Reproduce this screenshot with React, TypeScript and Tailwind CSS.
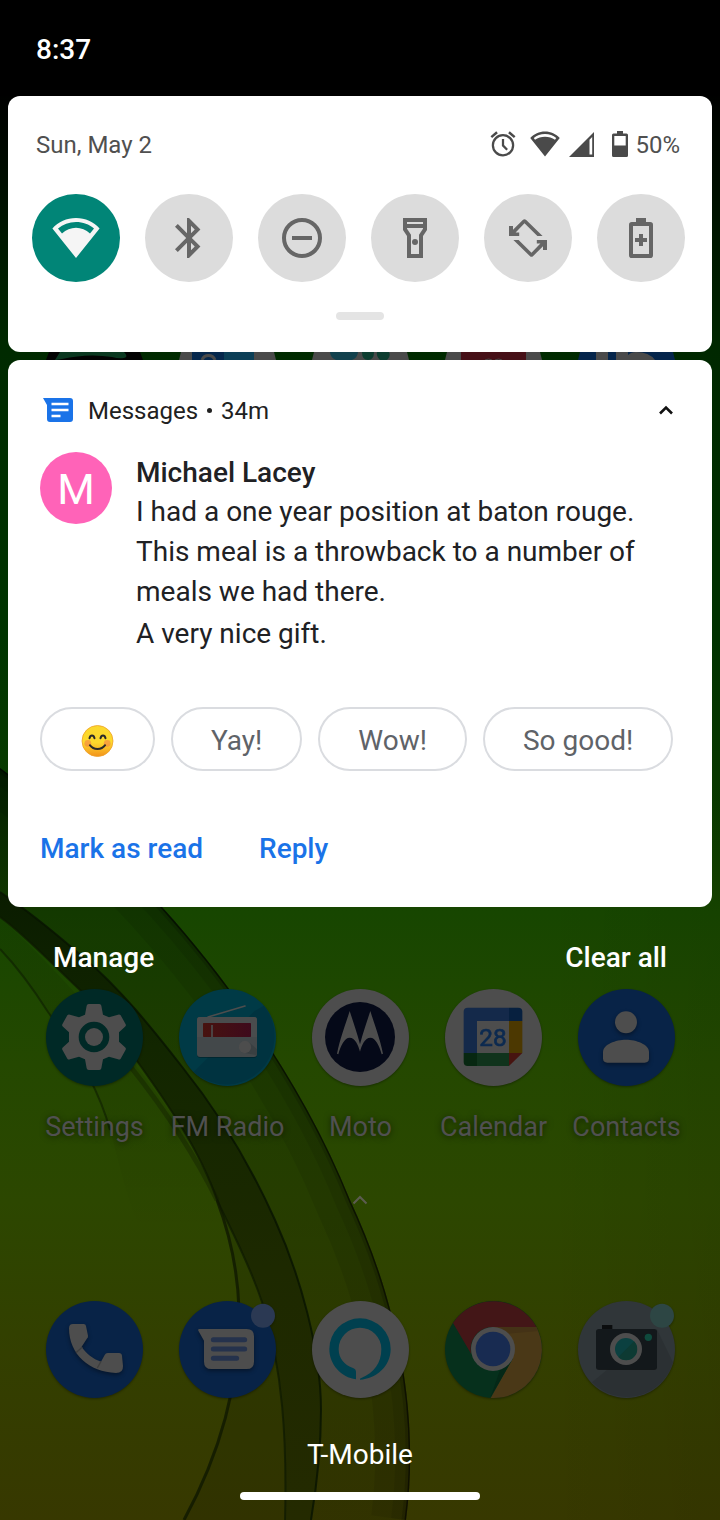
import React from "react";

function WifiGlyph({ className, fill }: { className: string; fill: string }) {
  return (
    <svg viewBox="0 0 24 24" className={className} fill={fill} fillRule="evenodd" aria-hidden="true">
      <path d="M12 2C7.3 2 3.2 3.9.2 7.2L12 22 23.8 7.2C20.8 3.9 16.7 2 12 2zM12 4c3.5 0 6.5 1.2 9 3.2L19 9.7C17 8 14.6 6.9 12 6.9S7 8 5 9.7L3 7.2C5.5 5.2 8.5 4 12 4z" />
    </svg>
  );
}

const rotateHalf = "M2.5 6h2v1.9L9.4 3q.85-.85 1.7 0L19.3 11h-2.6L10.25 4.6 5.8 9.2h1.8V11H2.5z";

const tiles: { label: string; on: boolean; icon: React.ReactNode }[] = [
  { label: "Wi-Fi", on: true, icon: <WifiGlyph className="size-12" fill="#f5f5f5" /> },
  {
    label: "Bluetooth",
    on: false,
    icon: (
      <svg viewBox="0 0 24 24" className="size-12" fill="#666">
        <path d="M17.71 7.71L12 2h-1v7.59L6.41 5 5 6.41 10.59 12 5 17.59 6.41 19 11 14.41V22h1l5.71-5.71-4.3-4.29zM13 5.83l1.88 1.88L13 9.59zm1.88 10.46L13 18.17v-3.76z" />
      </svg>
    ),
  },
  {
    label: "Do Not Disturb",
    on: false,
    icon: (
      <svg viewBox="0 0 24 24" className="size-12" fill="#666">
        <circle cx="12" cy="12" r="9" fill="none" stroke="#666" strokeWidth="2" />
        <path d="M7 11h10v2H7z" />
      </svg>
    ),
  },
  {
    label: "Flashlight",
    on: false,
    icon: (
      <svg viewBox="0 0 24 24" className="size-12" fill="#666" fillRule="evenodd">
        <path d="M6 2v6l2 3v11h8V11l2-3V2zM16 4v1H8V4zM14 10.4V20h-4v-9.6L8 7.4V7h8v.4z" />
        <circle cx="12" cy="14" r="1.5" />
      </svg>
    ),
  },
  {
    label: "Auto-rotate",
    on: false,
    icon: (
      <svg viewBox="0 0 24 24" className="size-12" fill="#666">
        <path d={rotateHalf} />
        <path d={rotateHalf} transform="rotate(180 12 12)" />
      </svg>
    ),
  },
  {
    label: "Battery Saver",
    on: false,
    icon: (
      <svg viewBox="0 0 24 24" className="size-12" fill="#666">
        <rect x="7" y="5" width="10" height="16" rx=".4" fill="none" stroke="#666" strokeWidth="2" />
        <path d="M9.5 2h5v2.5h-5zM11 10h2v2h2v2h-2v2h-2v-2H9v-2h2z" />
      </svg>
    ),
  },
];

function SmileEmoji() {
  return (
    <svg viewBox="0 0 32 32" className="h-8 w-[35px]" role="img" aria-label="Smiling face">
      <defs>
        <linearGradient id="face" x1="0" x2="0" y1="0" y2="1">
          <stop offset="0" stopColor="#fbd82c" />
          <stop offset=".55" stopColor="#fdd92c" />
          <stop offset="1" stopColor="#f3921b" />
        </linearGradient>
      </defs>
      <circle cx="16" cy="16" r="15.5" fill="url(#face)" stroke="#eda12a" strokeWidth=".8" />
      <circle cx="6.3" cy="18.3" r="3.4" fill="#f2704a" opacity=".5" />
      <circle cx="25.7" cy="18.3" r="3.4" fill="#f2704a" opacity=".5" />
      <path d="M8 13.2c.8-3.6 4.2-3.6 5 0M19 13.2c.8-3.6 4.2-3.6 5 0" fill="none" stroke="#2a2a2a" strokeWidth="2" strokeLinecap="round" />
      <path d="M8.4 20.2c3.6 5 11.6 5 15.2 0" fill="none" stroke="#2a2a2a" strokeWidth="2" strokeLinecap="round" />
    </svg>
  );
}

const disc = "size-[97px] overflow-visible drop-shadow-[0_1px_1px_rgba(0,0,0,0.35)]";

function SettingsIcon() {
  return (
    <svg viewBox="138 267 291 291" className={disc}>
      <circle cx="283.500" cy="412.500" r="145.500" fill="#002926" />
      <path
        fillRule="evenodd"
        fill="#4d4d4d"
        d="M266 312h32q5 0 6 5l5 27 18 8 27-8q5-2 8 2l15 27q2 4-2 7l-18 17v28l18 17q4 3 2 7l-15 27q-3 4-8 2l-27-8-18 8-5 27q-1 5-6 5h-32q-5 0-6-5l-5-27-18-8-27 8q-5 2-8-2l-15-27q-2-4 2-7l18-17v-28l-18-17q-4-3-2-7l15-27q3-4 8-2l27 8 18-8 5-27q1-5 6-5zM282 365a46 46 0 1 0 0 92 46 46 0 1 0 0-92z"
      />
      <circle cx="282" cy="411" r="27" fill="#4d4d4d" />
    </svg>
  );
}

function RadioIcon() {
  return (
    <svg viewBox="537 267 291 291" className={disc}>
      <defs>
        <linearGradient id="dial" x1="0" x2="1">
          <stop offset="0" stopColor="#47130f" />
          <stop offset="1" stopColor="#3e0a1c" />
        </linearGradient>
      </defs>
      <circle cx="682.500" cy="412.500" r="145.500" fill="#003a46" />
      <path d="M581 516L764 333 792 317A145.500 145.500 0 0 1 581 516z" fill="#003340" />
      <path d="M624 351L735 318" stroke="#4d4d4d" strokeWidth="5" strokeLinecap="round" />
      <rect x="591" y="353" width="180" height="120" rx="9" fill="#00191e" opacity=".6" />
      <rect x="591" y="351" width="180" height="120" rx="9" fill="#43484a" />
      <path d="M591 411v-51q0-9 9-9h162q9 0 9 9v51z" fill="#494c4d" />
      <rect x="609" y="369" width="144" height="42" rx="2" fill="url(#dial)" />
      <path d="M636 375v36" stroke="#4d4d4d" strokeWidth="5" />
      <path d="M749 428l22 20v18L735 459z" fill="#3a4042" />
      <circle cx="735" cy="441" r="18.500" fill="#4d4d4d" />
    </svg>
  );
}

function MotoIcon() {
  return (
    <svg viewBox="-144 267 291 291" className={disc}>
      <circle cx="1.500" cy="412.500" r="145.500" fill="#4d4d4d" />
      <circle cx="0" cy="411" r="105" fill="#050918" />
      <path
        fill="#4d4d4d"
        d="M-31 333C-20 366-8 402 0 433 8 402 20 366 31 333 43 372 61 420 69 461L65 463C58 436 46 413 31 413 15 413 5 435 0 455-5 435-15 413-31 413-46 413-58 436-65 463L-69 461C-61 420-43 372-31 333z"
      />
    </svg>
  );
}

function CalendarIcon() {
  return (
    <svg viewBox="255 267 291 291" className={disc}>
      <circle cx="400.500" cy="412.500" r="145.500" fill="#4d4d4d" />
      <path d="M323 323h124v40h-96v96h-40V335q0-12 12-12z" fill="#14294a" />
      <path d="M447 323h28q12 0 12 12v28h-40z" fill="#07203f" />
      <path d="M447 363h40v96h-40z" fill="#4c3801" />
      <path d="M351 459h96v39h-96z" fill="#10331c" />
      <path d="M311 459h40v39h-28q-12 0-12-12z" fill="#072711" />
      <path d="M447 459h40l-40 39z" fill="#471410" />
      <text
        x="399"
        y="437"
        textAnchor="middle"
        fontSize="73"
        fontFamily="Roboto, sans-serif"
        fontWeight="400"
        fill="#0c2a50"
        stroke="#0c2a50"
        strokeWidth="2"
      >
        28
      </text>
    </svg>
  );
}

function ContactsIcon() {
  return (
    <svg viewBox="654 267 291 291" className={disc}>
      <circle cx="799.500" cy="412.500" r="145.500" fill="#082347" />
      <g className="drop-shadow-[0_6px_6px_rgba(0,0,0,0.4)]" fill="#4d4d4d">
        <circle cx="798" cy="367" r="33" />
        <path d="M729 456c0-23 38-37 69-37s69 14 69 37v19q0 13-13 13H742q-13 0-13-13z" />
      </g>
    </svg>
  );
}

function PhoneIcon() {
  return (
    <svg viewBox="138 303 291 291" className={disc}>
      <circle cx="283.500" cy="448.500" r="145.500" fill="#082347" />
      <g className="drop-shadow-[0_6px_6px_rgba(0,0,0,0.4)]">
        <path
          fill="#4d4d4d"
          d="M219 372h32q6 0 7 6l6 29q1 6-4 10l-15 23c13 20 34 37 58 45l11-20q3-6 9-6h34q8 0 9 8l3 31q1 21-21 21C268 517 207 463 207 385q0-13 12-13z"
        />
        <path d="M228 458l19-17M292 504l11-20" stroke="#3e3e3e" strokeWidth="4" />
      </g>
    </svg>
  );
}

function MessagesIcon() {
  return (
    <svg viewBox="537 303 291 291" className={disc}>
      <circle cx="682.500" cy="448.500" r="145.500" fill="#082347" />
      <g className="drop-shadow-[0_6px_6px_rgba(0,0,0,0.4)]">
        <path fill="#4d4d4d" d="M598 387h142q22 0 22 22v76q0 22-22 22H634q-22 0-22-22v-63l-17-30q-2-5 3-5z" />
      </g>
      <path d="M640 419h94M640 447h94M640 475h70" stroke="#25324c" strokeWidth="15" strokeLinecap="round" />
      <circle cx="789" cy="347" r="36" fill="#2b3953" />
    </svg>
  );
}

function AlexaIcon() {
  return (
    <svg viewBox="-144 303 291 291" className={disc}>
      <circle cx="1.500" cy="448.500" r="145.500" fill="#4d4d4d" />
      <path
        fillRule="evenodd"
        fill="#00404f"
        d="M0 355a92 92 0 0 1 92 92c0 52-44 90-92 92 0-3 1-4 4-5 38-16 60-44 60-87a64 64 0 1 0-128 0c0 29 18 49 43 57q9 3 9 12v22C-56 532-92 494-92 447A92 92 0 0 1 0 355z"
      />
    </svg>
  );
}

function ChromeIcon() {
  return (
    <svg viewBox="255 303 291 291" className={disc}>
      <circle cx="400.500" cy="448.500" r="145.500" fill="#06301c" />
      <path d="M279 369A145.500 145.500 0 0 1 529 381H400a66 66 0 0 0-66 82z" fill="#431617" />
      <path d="M400 381h129A145.500 145.500 0 0 1 392 594l66-118z" fill="#4a3817" />
      <path d="M400 381h129l5 12-92 8z" fill="#443216" />
      <path d="M458 476l-31 54-35 60 30-85z" fill="#052817" />
      <circle cx="399" cy="447" r="66" fill="#4d4d4d" />
      <circle cx="399" cy="447" r="52" fill="#182b51" />
    </svg>
  );
}

function CameraIcon() {
  return (
    <svg viewBox="654 303 291 291" className={disc}>
      <circle cx="799.500" cy="448.500" r="145.500" fill="#303639" />
      <path d="M696 547L890 387l49 100A145 145 0 0 1 696 547z" fill="#2b3033" />
      <path d="M726 375h31v16h-31z" fill="#0b0d0e" />
      <rect x="708" y="389" width="183" height="121" rx="9" fill="#0b0e10" opacity=".7" />
      <rect x="708" y="387" width="183" height="120" rx="9" fill="#13181b" />
      <circle cx="798" cy="447" r="48" fill="#4d4d4d" />
      <circle cx="798" cy="447" r="33" fill="#0b4040" />
      <path d="M775 471L822 424A33 33 0 0 1 775 471z" fill="#0d3a33" />
      <circle cx="865" cy="412" r="11" fill="#0f4a3d" />
      <circle cx="906" cy="347" r="36" fill="#2d4644" />
    </svg>
  );
}

const homeApps = [
  { name: "Settings", icon: <SettingsIcon /> },
  { name: "FM Radio", icon: <RadioIcon /> },
  { name: "Moto", icon: <MotoIcon /> },
  { name: "Calendar", icon: <CalendarIcon /> },
  { name: "Contacts", icon: <ContactsIcon /> },
];

const dockApps = [
  { name: "Phone", icon: <PhoneIcon /> },
  { name: "Messages", icon: <MessagesIcon /> },
  { name: "Alexa", icon: <AlexaIcon /> },
  { name: "Chrome", icon: <ChromeIcon /> },
  { name: "Camera", icon: <CameraIcon /> },
];

const sliver = "h-2 w-[97px]";

function HiddenAppRow() {
  return (
    <div className="grid h-2 grid-cols-5 justify-items-center pr-[27px] pl-7" aria-hidden="true">
      <svg viewBox="0 0 97 8" className={sliver}>
        <path d="M3 0h91l3 8H0z" fill="#020202" />
        <path d="M14 0h64q5 5 0 6-5 1-12-1-24-4-50 2l-6 1H9z" fill="#0a3820" />
      </svg>
      <svg viewBox="0 0 97 8" className={sliver}>
        <path d="M2 0h93l2 8H0z" fill="#4a4a4a" />
        <path d="M13 0h32v8H13z" fill="#06274c" />
        <path d="M45 0h30v8H45z" fill="#0c3f57" />
        <path d="M23 8a7 7 0 0 1 13 0" fill="none" stroke="#4a4a4a" strokeWidth="3" />
      </svg>
      <svg viewBox="0 0 97 8" className={sliver}>
        <path d="M2 0h93l2 8H0z" fill="#4a4a4a" />
        <path d="M18 0h28q0 5-6 8H24q-6-3-6-8z" fill="#12414d" />
        <path d="M50 0h12q0 8-6 8t-6-8zM65 0h12q2 4-2 8H68q-4-4-3-8z" fill="#0d3d30" />
      </svg>
      <svg viewBox="0 0 97 8" className={sliver}>
        <path d="M2 0h93l2 8H0z" fill="#4a4a4a" />
        <path d="M16 0h65v8H16z" fill="#461017" />
        <path d="M40 8q4-2 7 0M50 8q4-2 7 0" stroke="#4a4a4a" strokeWidth="1" fill="none" />
      </svg>
      <svg viewBox="0 0 97 8" className={sliver}>
        <path d="M2 0h93l2 8H0z" fill="#05254b" />
        <path d="M18 0h12v8H18zM38 0h12v3q3-3 8-3 13 0 19 8H38z" fill="#4a4a4a" />
      </svg>
    </div>
  );
}

const bladeEdge = "M0 768C70 820 130 870 162 907 237 990 308 1095 350 1200 390 1285 422 1400 406 1520";
const bandUpper = "M0 892C30 912 60 937 84 958 120 988 155 1032 183 1068 215 1108 248 1160 275 1220 300 1275 321 1350 321 1410 321 1450 316 1490 311 1520";
const bandLower = "M285 1520C287 1440 283 1370 262 1302 248 1260 230 1228 217 1200 200 1150 165 1100 137 1061 115 1030 98 1008 80 990 50 962 25 935 0 917";

function Wallpaper() {
  return (
    <svg viewBox="0 0 720 1520" preserveAspectRatio="none" className="absolute inset-0 -z-10 size-full" aria-hidden="true">
      <defs>
        <linearGradient id="sky" x1="0" x2="0" y1="0" y2="1">
          <stop offset=".06" stopColor="#000000" />
          <stop offset=".23" stopColor="#002a00" />
          <stop offset=".42" stopColor="#003500" />
          <stop offset=".53" stopColor="#0a3c00" />
          <stop offset=".6" stopColor="#174600" />
          <stop offset=".7" stopColor="#244800" />
          <stop offset=".79" stopColor="#2c4700" />
          <stop offset=".89" stopColor="#333f00" />
          <stop offset="1" stopColor="#373800" />
        </linearGradient>
        <linearGradient id="edge" x1="0" x2="1" y1="0" y2="0">
          <stop offset=".75" stopColor="#000" stopOpacity="0" />
          <stop offset="1" stopColor="#000" stopOpacity=".06" />
        </linearGradient>
        <linearGradient id="band" gradientUnits="userSpaceOnUse" x1="0" x2="0" y1="890" y2="1520">
          <stop offset="0" stopColor="#0a1c00" />
          <stop offset=".25" stopColor="#122600" />
          <stop offset=".6" stopColor="#1d2900" />
          <stop offset="1" stopColor="#242a00" />
        </linearGradient>
        <linearGradient id="blade" gradientUnits="userSpaceOnUse" x1="0" x2="0" y1="768" y2="1520">
          <stop offset="0" stopColor="#000" stopOpacity=".45" />
          <stop offset=".2" stopColor="#000" stopOpacity=".18" />
          <stop offset="1" stopColor="#000" stopOpacity=".1" />
        </linearGradient>
        <linearGradient id="leaf" gradientUnits="userSpaceOnUse" x1="0" x2="0" y1="1040" y2="1240">
          <stop offset="0" stopColor="#000" stopOpacity=".08" />
          <stop offset="1" stopColor="#000" stopOpacity="0" />
        </linearGradient>
        <clipPath id="bladeShape">
          <path d={bladeEdge + "H0z"} />
        </clipPath>
      </defs>
      <path d="M0 0h720v1520H0z" fill="url(#sky)" />
      <path d="M0 0h720v1520H0z" fill="url(#edge)" />

      <path d={bladeEdge + "H311C316 1490 321 1450 321 1410 321 1350 300 1275 275 1220 248 1160 215 1108 183 1068 155 1032 120 988 84 958 60 937 30 912 0 892z"} fill="url(#blade)" />
      <g clipPath="url(#bladeShape)" fill="none" stroke="#000">
        <path d={bladeEdge} strokeWidth="70" opacity=".08" />
        <path d={bladeEdge} strokeWidth="30" opacity=".08" />
        <path d={bladeEdge} strokeWidth="9" opacity=".15" />
        <path d={bladeEdge} strokeWidth="3" opacity=".55" />
      </g>

      <path d="M0 949C20 970 34 990 48 1012 70 1042 98 1085 110 1130 120 1165 126 1200 145 1240H232L217 1200C190 1120 80 990 0 917z" fill="url(#leaf)" />
      <path d="M217 1200C232 1240 238 1275 239 1310 240 1380 222 1450 184 1520H285C287 1440 283 1370 262 1302 248 1260 230 1228 217 1200z" fill="#000" opacity=".1" />
      <path d={bandUpper + "H285C287 1440 283 1370 262 1302 248 1260 230 1228 217 1200 200 1150 165 1100 137 1061 115 1030 98 1008 80 990 50 962 25 935 0 917z"} fill="url(#band)" />
      <path d={bandUpper} fill="none" stroke="#081300" strokeWidth="2" opacity=".8" />
      <path d={bandLower} fill="none" stroke="#0d1800" strokeWidth="2" opacity=".7" />
      <path d="M130 1066C165 1110 195 1155 217 1200" fill="none" stroke="#0d1800" strokeWidth="5" opacity=".35" />
      <path d="M217 1200C232 1240 238 1275 239 1310 240 1380 222 1450 184 1520" fill="none" stroke="#0f1800" strokeWidth="3" opacity=".8" />
      <path d="M0 949C20 970 34 990 48 1012 70 1042 98 1085 110 1130" fill="none" stroke="#0d1c00" strokeWidth="2" opacity=".6" />
    </svg>
  );
}

const chip = "flex h-16 items-center rounded-full border-2 border-[#dadce0] px-[38px] pt-[3px] text-[28px] text-[#5f6368]";

export default function App() {
  return (
    <main className="relative isolate flex min-h-screen flex-col overflow-hidden bg-black font-['Roboto',sans-serif]">
      <Wallpaper />

      <header className="flex h-24 items-center bg-black px-9 pt-1 text-[28px] leading-8 font-medium text-white">
        <time>8:37</time>
      </header>

      <section aria-label="Quick settings" className="mx-2 rounded-xl bg-white pt-[34px] pb-8">
        <div className="flex h-7 items-center pr-8 pl-7 text-2xl leading-7 text-[#505050]">
          <span className="pt-0.5">Sun, May 2</span>
          <svg viewBox="0 0 24 24" className="ml-auto size-[30px]" fill="#4a4a4a" aria-hidden="true">
            <path d="M22 5.72l-4.6-3.86-1.29 1.53 4.6 3.86zM7.88 3.39L6.6 1.86 2 5.71l1.29 1.53zM12.9 8H11.1v5.500l3.600 3.600 1.250-1.200-3.050-3.100zM12 4a9 9 0 1 0 0 18 9 9 0 0 0 0-18zm0 16.200a7.200 7.200 0 1 1 0-14.400 7.200 7.200 0 0 1 0 14.400z" />
          </svg>
          <svg viewBox="0 0 24 24" className="ml-3 size-[30px]" fill="#4a4a4a" fillRule="evenodd" aria-hidden="true">
            <path d="M12 2C7.300 2 3.200 3.900.2 7.200L12 22 23.800 7.200C20.800 3.900 16.700 2 12 2zM12 4c3.500 0 6.500 1.200 9 3.200L20 8.500C17.700 7 15 6.100 12 6.100S6.300 7 4 8.500L3 7.200C5.500 5.200 8.500 4 12 4z" />
          </svg>
          <svg viewBox="0 0 25 25" className="ml-[9px] size-[25px]" fill="#4a4a4a" fillRule="evenodd" aria-hidden="true">
            <path d="M25 0v25H0zM23.200 5L20.500 7.700V22.500h2.700z" />
          </svg>
          <svg viewBox="0 0 16 26" className="ml-[18px] h-[26px] w-4" fill="#4a4a4a" fillRule="evenodd" aria-hidden="true">
            <path d="M5 0h6v2.500h3.500Q16 2.500 16 4v20.500q0 1.500-1.500 1.500h-13Q0 26 0 24.500V4q0-1.500 1.500-1.500H5zM2.300 5v9.500h11.400V5z" />
          </svg>
          <span className="ml-[7px] pt-0.5">50%</span>
        </div>

        <div className="mt-9 flex justify-between pr-[27px] pl-6">
          {tiles.map((tile) => (
            <button
              key={tile.label}
              type="button"
              aria-label={tile.label}
              aria-pressed={tile.on}
              className={
                tile.on
                  ? "flex size-[88px] items-center justify-center rounded-full bg-[#018577]"
                  : "flex size-[88px] items-center justify-center rounded-full bg-[#dcdcdc]"
              }
            >
              {tile.icon}
            </button>
          ))}
        </div>

        <div className="mx-auto mt-[30px] h-2 w-12 rounded-full bg-[#e4e4e4]" />
      </section>

      <HiddenAppRow />

      <article className="mx-2 rounded-xl bg-white px-8 pt-9 pb-[38px]">
        <div className="flex h-7 items-center text-2xl leading-7 text-[#212121]">
          <svg viewBox="0 0 30 24" className="ml-[3px] h-6 w-[30px]" aria-hidden="true">
            <path d="M0 0h27q3 0 3 3v18q0 3-3 3H7q-3 0-3-3V7z" fill="#1a73e8" />
            <path d="M8.500 6h17M8.500 12h17M8.500 18h9" stroke="#fff" strokeWidth="2.600" />
          </svg>
          <span className="ml-[15px] pt-0.5">Messages</span>
          <span className="mx-[9px] size-[5px] rounded-full bg-[#212121]" />
          <span className="pt-0.5">34m</span>
          <button type="button" aria-label="Collapse" className="mr-[6px] ml-auto flex h-7 items-center">
            <svg viewBox="0 0 16 10" className="h-[10px] w-4" fill="none" stroke="#111" strokeWidth="2.600">
              <path d="M2 8.500l6-6 6 6" />
            </svg>
          </button>
        </div>

        <div className="mt-7 flex gap-6">
          <span className="flex size-[72px] shrink-0 items-center justify-center rounded-full bg-[#ff63b8] pt-0.5 text-[43px] leading-none text-white">
            M
          </span>
          <div className="text-[28px] leading-10 text-[#202124]">
            <h2 className="pt-px font-medium">Michael Lacey</h2>
            <p className="-mt-px max-w-[512px]">I had a one year position at baton rouge. This meal is a throwback to a number of meals we had there.</p>
            <p className="mt-0.5">A very nice gift.</p>
          </div>
        </div>

        <div className="mt-[53px] flex gap-4">
          <button type="button" className={chip}>
            <SmileEmoji />
          </button>
          <button type="button" className={chip}>
            Yay!
          </button>
          <button type="button" className={chip}>
            Wow!
          </button>
          <button type="button" className={chip}>
            So good!
          </button>
        </div>

        <div className="mt-[58px] flex gap-14 text-[28px] leading-10 font-medium text-[#1a73e8]">
          <button type="button">Mark as read</button>
          <button type="button">Reply</button>
        </div>
      </article>

      <div className="mt-[31px] flex justify-between px-[53px] text-[28px] leading-10 font-medium text-white">
        <button type="button">Manage</button>
        <button type="button">Clear all</button>
      </div>

      <nav aria-label="Apps" className="mt-[11px] grid grid-cols-5 pr-[27px] pl-7">
        {homeApps.map((app) => (
          <a key={app.name} href="#" className="flex flex-col items-center whitespace-nowrap">
            {app.icon}
            <span className="mt-[21px] text-[27px] leading-10 text-[#505050] [text-shadow:0_1px_6px_rgba(0,0,0,0.6)]">{app.name}</span>
          </a>
        ))}
      </nav>

      <svg viewBox="0 0 16 10" className="mx-auto mt-12 h-[10px] w-4" fill="none" stroke="#5c5c50" strokeWidth="2" aria-hidden="true">
        <path d="M1.500 8.500L8 2l6.500 6.500" />
      </svg>

      <nav aria-label="Dock" className="mt-24 grid grid-cols-5 justify-items-center pr-[27px] pl-7">
        {dockApps.map((app) => (
          <a key={app.name} href="#" aria-label={app.name}>
            {app.icon}
          </a>
        ))}
      </nav>

      <footer className="mt-auto flex flex-col items-center pb-5 text-[28px] leading-10 text-white">
        <span>T-Mobile</span>
        <span className="mt-[17px] h-2 w-60 rounded-full bg-white" />
      </footer>
    </main>
  );
}
